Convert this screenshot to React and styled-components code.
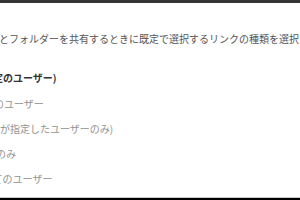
import React from 'react'
import styled, { createGlobalStyle } from 'styled-components'

const GlobalStyle = createGlobalStyle`
  html, body {
    margin: 0;
    padding: 0;
    background: #fff;
    overflow: hidden;
  }
  body {
    font-family: "Noto Sans CJK JP", "Noto Sans", sans-serif;
  }
`

const Page = styled.div`
  width: 300px;
  height: 200px;
  display: flex;
  flex-direction: column;
  overflow: hidden;
`

const TopBar = styled.div`
  height: 3px;
  background: #363636;
  flex-shrink: 0;
`

const Content = styled.div`
  flex: 1;
  padding-top: 29px;
  overflow: hidden;
`

const Description = styled.p`
  margin: 0 0 25px;
  font-size: 10px;
  line-height: 14px;
  color: #555;
  white-space: nowrap;
  text-indent: ${(p) => p.$indent}px;
`

const Heading = styled.div`
  font-size: 10px;
  line-height: 14px;
  font-weight: 700;
  color: #333;
  white-space: nowrap;
  text-indent: ${(p) => p.$indent}px;
  margin-bottom: 12px;
`

const OptionList = styled.div`
  display: flex;
  flex-direction: column;
  gap: 11px;
`

const Option = styled.div`
  font-size: 10px;
  line-height: 14px;
  color: #929292;
  white-space: nowrap;
  text-indent: ${(p) => p.$indent}px;
`

const BottomRule = styled.div`
  height: 1px;
  background: #c8c8c8;
  flex-shrink: 0;
`

const BottomBar = styled.div`
  height: 2px;
  background: #000;
  flex-shrink: 0;
`

const options = [
  { text: '内のユーザー', indent: -16 },
  { text: 'ーが指定したユーザーのみ)', indent: -10 },
  { text: '者のみ', indent: -14 },
  { text: 'べてのユーザー', indent: -17 },
]

export default function App() {
  return (
    <>
      <GlobalStyle />
      <Page>
        <TopBar />
        <Content>
          <Description $indent={-1}>
            とフォルダーを共有するときに既定で選択するリンクの種類を選択します。
          </Description>
          <Heading $indent={-7}>定のユーザー)</Heading>
          <OptionList>
            {options.map((o) => (
              <Option key={o.text} $indent={o.indent}>
                {o.text}
              </Option>
            ))}
          </OptionList>
        </Content>
        <BottomRule />
        <BottomBar />
      </Page>
    </>
  )
}
